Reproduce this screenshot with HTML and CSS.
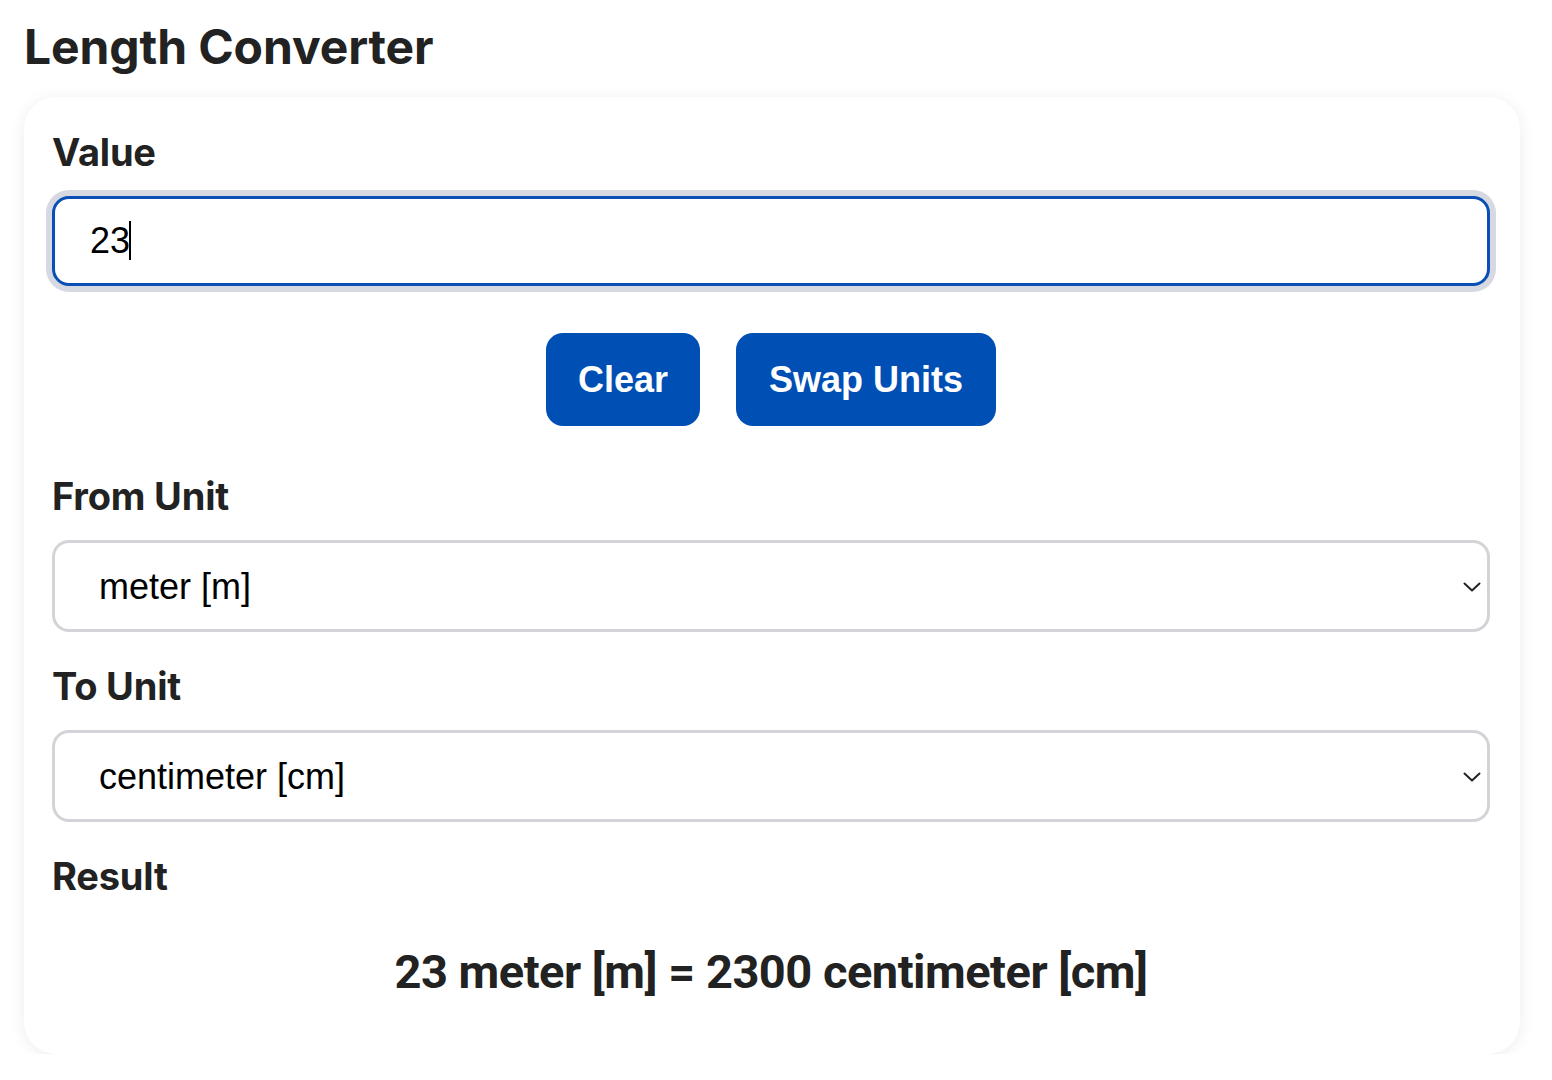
FILE: index.html
```html
<!DOCTYPE html>
<html lang="en">
<head>
<meta charset="utf-8">
<title>Length Converter</title>
<link rel="stylesheet" href="styles.css">
</head>
<body>
<main class="page">
  <h1 class="title">Length Converter</h1>
  <section class="card">
    <div class="group">
      <label class="label" for="value">Value</label>
      <div class="input-wrap"><input id="value" class="input" type="text" value="23"><span class="caret"></span></div>
    </div>
    <div class="actions">
      <button class="btn" type="button">Clear</button>
      <button class="btn btn-wide" type="button">Swap Units</button>
    </div>
    <div class="group">
      <label class="label" for="from">From Unit</label>
      <div class="select-wrap">
        <select id="from" class="select">
          <option selected>meter [m]</option>
          <option>centimeter [cm]</option>
        </select>
        <svg class="chev" viewBox="0 0 18 10" width="18" height="10" aria-hidden="true"><path d="M1.5 1.5 L9 8.5 L16.5 1.5" fill="none" stroke="#222" stroke-width="2" stroke-linecap="round" stroke-linejoin="round"/></svg>
      </div>
    </div>
    <div class="group group-gap">
      <label class="label" for="to">To Unit</label>
      <div class="select-wrap">
        <select id="to" class="select">
          <option>meter [m]</option>
          <option selected>centimeter [cm]</option>
        </select>
        <svg class="chev" viewBox="0 0 18 10" width="18" height="10" aria-hidden="true"><path d="M1.5 1.5 L9 8.5 L16.5 1.5" fill="none" stroke="#222" stroke-width="2" stroke-linecap="round" stroke-linejoin="round"/></svg>
      </div>
    </div>
    <div class="group group-gap">
      <div class="label label-result">Result</div>
      <p class="result">23 meter [m] = 2300 centimeter [cm]</p>
    </div>
  </section>
</main>
</body>
</html>
```

FILE: styles.css
```css
* { box-sizing: border-box; }
html, body { margin: 0; padding: 0; background: #fff; }
body { font-family: Inter, "Noto Sans", sans-serif; color: #222; }
.page { padding: 18px 32px 0 24px; }
.title {
  margin: 0 0 21px 0;
  font-size: 48px;
  line-height: 58px;
  font-weight: 700;
  color: #222;
  letter-spacing: -0.1px;
}
.card {
  background: #fff;
  border-radius: 32px;
  box-shadow: 0 2px 16px rgba(0,0,0,0.075);
  padding: 31px 30px 54px 28px;
  display: flex;
  flex-direction: column;
}
.group { display: flex; flex-direction: column; }
.group-gap { margin-top: 30px; }
.label {
  font-size: 38px;
  line-height: 48px;
  font-weight: 700;
  color: #222;
  letter-spacing: -0.2px;
  margin-bottom: 20px;
}
.input-wrap { position: relative; }
.input {
  width: 100%;
  height: 90px;
  border: 3px solid #0a4fb6;
  border-radius: 17px;
  box-shadow: 0 0 0 6px #d6d9e2;
  padding: 0 35px;
  font-family: "Liberation Sans", Arial, sans-serif;
  font-size: 36px;
  color: #000;
  outline: none;
  background: #fff;
}
.caret {
  position: absolute;
  left: 77px;
  top: 25px;
  width: 2px;
  height: 39px;
  background: #000;
}
.actions {
  display: flex;
  justify-content: center;
  gap: 36px;
  margin: 47px 0 46px 0;
}
.btn {
  height: 93px;
  padding: 0 32px;
  border: none;
  border-radius: 17px;
  background: #004fb5;
  color: #fff;
  font-family: "Liberation Sans", Arial, sans-serif;
  font-weight: 700;
  font-size: 36px;
}
.btn-wide { padding: 0 33px; }
.select-wrap { position: relative; }
.select {
  width: 100%;
  height: 92px;
  -webkit-appearance: none;
  appearance: none;
  border: 3px solid #d3d3d8;
  border-radius: 17px;
  background: #fff;
  padding: 0 44px;
  font-family: "Liberation Sans", Arial, sans-serif;
  font-size: 36px;
  color: #000;
}
.chev {
  position: absolute;
  right: 9px;
  top: 42px;
  width: 18px;
  height: 10px;
}
.label-result { margin-bottom: 0; }
.result {
  margin: 44px 0 0 0;
  text-align: center;
  font-family: Roboto, "Noto Sans", sans-serif;
  font-weight: 700;
  font-size: 47px;
  line-height: 56px;
  letter-spacing: -0.5px;
  color: #222;
}
```
